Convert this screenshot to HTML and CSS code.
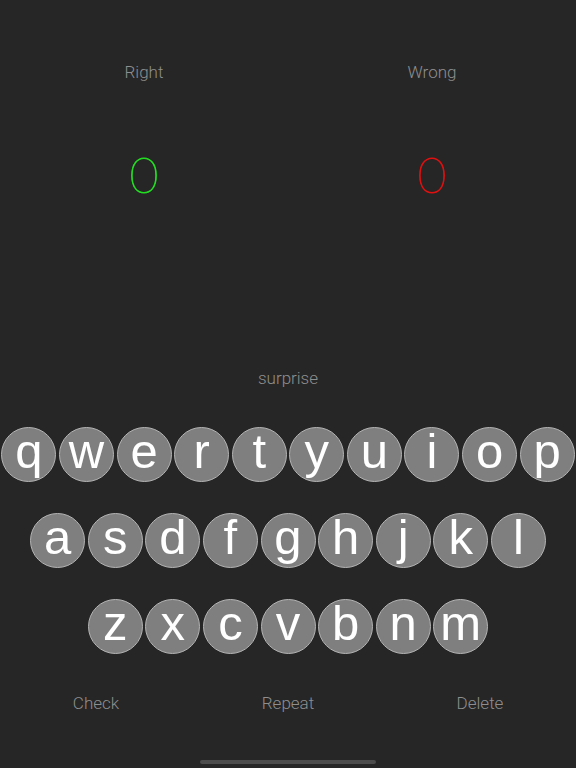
FILE: index.html
```html
<!DOCTYPE html>
<html lang="en">
<head>
  <meta charset="UTF-8" />
  <meta name="viewport" content="width=device-width, initial-scale=1.0"/>
  <title>Spelling</title>
  <link rel="stylesheet" href="styles.css">
</head>
<body>

  <!-- Score -->
  <div class="scores">
    <div class="score">
      <div class="score-label">Right</div>
      <div class="score-value right">0</div>
    </div>
    <div class="score">
      <div class="score-label">Wrong</div>
      <div class="score-value wrong">0</div>
    </div>
  </div>

  <!-- Current word -->
  <div class="word">surprise</div>

  <!-- Keyboard -->
  <div class="keyboard">
    <div class="key-row">
      <div class="key">q</div>
      <div class="key">w</div>
      <div class="key">e</div>
      <div class="key">r</div>
      <div class="key">t</div>
      <div class="key">y</div>
      <div class="key">u</div>
      <div class="key">i</div>
      <div class="key">o</div>
      <div class="key">p</div>
    </div>
    <div class="key-row">
      <div class="key">a</div>
      <div class="key">s</div>
      <div class="key">d</div>
      <div class="key">f</div>
      <div class="key">g</div>
      <div class="key">h</div>
      <div class="key">j</div>
      <div class="key">k</div>
      <div class="key">l</div>
    </div>
    <div class="key-row">
      <div class="key">z</div>
      <div class="key">x</div>
      <div class="key">c</div>
      <div class="key">v</div>
      <div class="key">b</div>
      <div class="key">n</div>
      <div class="key">m</div>
    </div>
  </div>

  <!-- Actions -->
  <div class="actions">
    <div class="action">Check</div>
    <div class="action">Repeat</div>
    <div class="action">Delete</div>
  </div>

  <div class="home-bar"></div>

</body>
</html>
```

FILE: styles.css
```css
body {
  font-family: Roboto, "Liberation Sans", sans-serif;
  font-weight: 300;
  margin: 0;
  height: 768px;
  background-color: #262626;
  color: #8e8e8e;
  overflow: hidden;
}

/* Score */
.scores {
  display: grid;
  grid-template-columns: 1fr 1fr;
  padding-top: 60px;
}
.score {
  text-align: center;
}
.score-label {
  font-size: 17px;
  line-height: 24px;
}
.score-value {
  margin-top: 60px;
  font-family: Lato, Roboto, sans-serif;
  font-size: 50px;
  font-weight: 100;
  line-height: 60px;
  -webkit-text-stroke: 0.9px currentColor;
}
.score-value.right {
  color: #22dd22;
}
.score-value.wrong {
  color: #e01010;
}

/* Word */
.word {
  margin-top: 162px;
  text-align: center;
  font-size: 17px;
  line-height: 24px;
}

/* Keyboard */
.keyboard {
  margin-top: 37px;
  display: flex;
  flex-direction: column;
  gap: 31px;
}
.key-row {
  display: flex;
  justify-content: center;
  gap: 2.6px;
}
.key {
  width: 55px;
  height: 55px;
  box-sizing: border-box;
  border-radius: 50%;
  background-color: #7f7f7f;
  border: 1px solid #b4b4b4;
  display: flex;
  align-items: center;
  justify-content: center;
  padding-bottom: 7px;
  font-family: "Liberation Sans", Arial, sans-serif;
  font-weight: normal;
  font-size: 49px;
  line-height: 48px;
  color: #fff;
}

/* Actions */
.actions {
  margin-top: 37px;
  display: grid;
  grid-template-columns: 1fr 1fr 1fr;
  text-align: center;
  font-size: 17px;
  line-height: 24px;
}

.home-bar {
  width: 176px;
  height: 4px;
  margin: 45px auto 0;
  border-radius: 2px;
  background-color: #4c4c4c;
}
```
